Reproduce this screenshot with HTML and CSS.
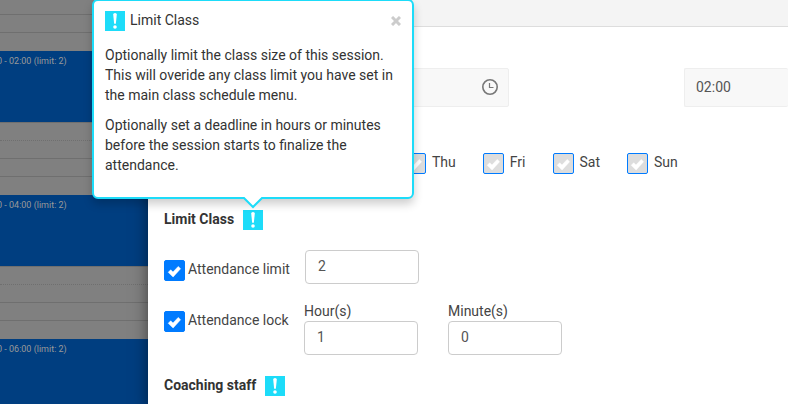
FILE: index.html
```html
<!DOCTYPE html>
<html lang="en">
<head>
    <meta charset="UTF-8">
    <meta name="viewport" content="width=device-width, initial-scale=1.0">
    <title>Limit Class</title>
    <link rel="stylesheet" href="styles.css">
</head>
<body>
    <svg class="defs" width="0" height="0">
        <symbol id="tick" viewBox="0 0 21 21">
            <path d="M4.2 12.3L6.7 9.8L9 12L14.2 6.4L16.6 8.7L9.1 17Z" fill="#fff" stroke="#fff" stroke-width=".5" stroke-linejoin="round"/>
        </symbol>
        <symbol id="info" viewBox="0 0 20 20">
            <path d="M8.2 3.6Q8.2 2 10 2T11.8 3.6L10.9 12.2Q10.7 13 10 13T9.1 12.2Z" fill="#fff"/>
            <circle cx="10" cy="16" r="1.8" fill="#fff"/>
        </symbol>
    </svg>

    <div class="page">
        <div class="calendar">
            <div class="slot first"></div>
            <div class="slot"></div>
            <div class="slot last"></div>
            <div class="event">0 - 02:00 (limit: 2)</div>
            <div class="slot half"></div>
            <div class="slot"></div>
            <div class="slot"></div>
            <div class="slot last"></div>
            <div class="event">0 - 04:00 (limit: 2)</div>
            <div class="slot half"></div>
            <div class="slot"></div>
            <div class="slot"></div>
            <div class="slot last"></div>
            <div class="event">0 - 06:00 (limit: 2)</div>
        </div>

        <div class="modal">
            <div class="modal-header"></div>
            <form class="modal-body">
                <div class="times">
                    <div class="time">
                        <input type="text" aria-label="Start time" disabled>
                        <svg class="clock" width="18" height="18" viewBox="0 0 18 18" fill="none" stroke="#777">
                            <circle cx="9" cy="9" r="7.2" stroke-width="1.6"/>
                            <path d="M8.5 5V9.5H12.5" stroke-width="1.2"/>
                        </svg>
                    </div>
                    <div class="time end">
                        <input type="text" aria-label="End time" value="02:00" disabled>
                    </div>
                </div>

                <div class="days">
                    <label class="day"><span class="check"><input type="checkbox" checked disabled><svg><use href="#tick"/></svg></span>Thu</label>
                    <label class="day"><span class="check"><input type="checkbox" checked disabled><svg><use href="#tick"/></svg></span>Fri</label>
                    <label class="day"><span class="check"><input type="checkbox" checked disabled><svg><use href="#tick"/></svg></span>Sat</label>
                    <label class="day"><span class="check"><input type="checkbox" checked disabled><svg><use href="#tick"/></svg></span>Sun</label>
                </div>

                <h4 class="section-title">Limit Class
                    <button type="button" class="info" aria-label="About limit class"><svg><use href="#info"/></svg></button>
                </h4>

                <div class="option">
                    <label class="option-name"><span class="check"><input type="checkbox" checked><svg><use href="#tick"/></svg></span>Attendance limit</label>
                    <input class="number" type="text" aria-label="Attendance limit value" value="2">
                </div>

                <div class="option lock">
                    <label class="option-name"><span class="check"><input type="checkbox" checked><svg><use href="#tick"/></svg></span>Attendance lock</label>
                    <div class="field">
                        <label for="hours">Hour(s)</label>
                        <input class="number" type="text" id="hours" value="1">
                    </div>
                    <div class="field">
                        <label for="minutes">Minute(s)</label>
                        <input class="number" type="text" id="minutes" value="0">
                    </div>
                </div>

                <h4 class="section-title">Coaching staff
                    <button type="button" class="info" aria-label="About coaching staff"><svg><use href="#info"/></svg></button>
                </h4>
            </form>
        </div>

        <div class="popover">
            <div class="popover-header">
                <span class="info"><svg><use href="#info"/></svg></span>
                <span class="popover-title">Limit Class</span>
                <button type="button" class="close" aria-label="Close">
                    <svg width="10" height="10" viewBox="0 0 10 10" stroke="#ccc" stroke-width="3">
                        <path d="M1 1L9 9M9 1L1 9"/>
                    </svg>
                </button>
            </div>
            <p>Optionally limit the class size of this session. This will overide any class limit you have set in the main class schedule menu.</p>
            <p>Optionally set a deadline in hours or minutes before the session starts to finalize the attendance.</p>
            <svg class="arrow" width="20" height="12" viewBox="0 0 20 12">
                <path d="M0 0H20L10 10Z" fill="#fff"/>
                <path d="M0 1H1L10 10L19 1H20" fill="none" stroke="#1ddcf9" stroke-width="2"/>
            </svg>
        </div>
    </div>
</body>
</html>
```

FILE: styles.css
```css
* {
    box-sizing: border-box;
}

body {
    margin: 0;
    font-family: Roboto, sans-serif;
    font-size: 14px;
    line-height: 20px;
    color: #333;
    background-color: #808080;
}

.defs {
    position: absolute;
}

.page {
    position: relative;
    display: flex;
    height: 100vh;
    overflow: hidden;
}

/* Calendar behind the backdrop */
.calendar {
    flex: 0 0 148px;
    background-color: #808080;
}

.slot {
    height: 18px;
    border-bottom: 1px solid #6f6f6f;
}

.slot.first {
    height: 15px;
}

.slot.half {
    border-bottom-style: dotted;
}

.slot.last {
    border-bottom: none;
}

.event {
    height: 72px;
    padding-top: 1px;
    background-color: #003e80;
    border-bottom: 1px solid #6f6f6f;
    font-size: 9px;
    line-height: 18px;
    color: #999;
    text-indent: -3px;
    white-space: nowrap;
}

/* Modal */
.modal {
    flex: 1;
    min-width: 0;
    background-color: #fff;
    box-shadow: 0 5px 15px rgba(0, 0, 0, 0.5);
}

.modal-header {
    height: 27px;
    background-color: #f4f4f4;
    border-bottom: 1px solid #ddd;
}

.modal-body {
    padding: 41px 0 0 16px;
}

.times {
    display: grid;
    grid-template-columns: 345fr 104fr;
    column-gap: 175px;
}

.time {
    display: flex;
    align-items: center;
    min-width: 0;
    height: 39px;
    padding: 0 9px 2px 11px;
    background-color: #f8f8f8;
    border: 1px solid #eee;
    border-radius: 2px;
}

.time.end {
    padding-right: 0;
    border-right: none;
}

.time input {
    flex: 1;
    min-width: 0;
    padding: 0;
    border: none;
    background: none;
    font: inherit;
    color: #555;
}

.days {
    display: flex;
    gap: 27px;
    margin-top: 46px;
    padding-left: 241px;
}

.day {
    display: flex;
    gap: 6px;
    line-height: 19px;
    color: #444;
}

.check {
    display: grid;
    width: 21px;
    height: 21px;
}

.check input,
.check svg {
    grid-area: 1 / 1;
    width: 21px;
    height: 21px;
    margin: 0;
}

.check svg {
    pointer-events: none;
}

.check input {
    appearance: none;
    background-color: #007bff;
    border: 1px solid #007bff;
    border-radius: 2px;
}

.check input:disabled {
    background-color: #ddd;
}

.section-title {
    display: flex;
    gap: 9px;
    margin: 36px 0 20px;
    font-size: 14px;
    font-weight: 700;
    line-height: 19px;
}

.info {
    display: block;
    width: 20px;
    height: 20px;
    padding: 0;
    border: none;
    background-color: #1ddcf9;
}

.info svg {
    display: block;
    width: 20px;
    height: 20px;
}

.option {
    display: flex;
}

.option-name {
    display: flex;
    gap: 3px;
    width: 141px;
    padding-top: 10px;
    line-height: 18px;
    color: #444;
}

.option.lock {
    gap: 30px;
    margin-top: 17px;
}

.lock .option-name {
    width: 110px;
    white-space: nowrap;
}

.field {
    display: flex;
    flex-direction: column;
    line-height: 20px;
    color: #444;
}

.number {
    width: 114px;
    height: 34px;
    padding: 0 12px 2px;
    border: 1px solid #ccc;
    border-radius: 4px;
    font: inherit;
    line-height: 20px;
    color: #555;
}

.lock + .section-title {
    margin-top: 21px;
}

/* Popover */
.popover {
    position: absolute;
    top: -1px;
    left: 92px;
    width: 322px;
    padding: 10px 11px 12px;
    background-color: #fff;
    border: 2px solid #1ddcf9;
    border-radius: 6px;
    box-shadow: 0 5px 10px rgba(0, 0, 0, 0.2);
}

.popover-header {
    display: flex;
    gap: 5px;
    margin-bottom: 14px;
}

.popover-title {
    flex: 1;
    line-height: 19px;
}

.close {
    padding: 0;
    border: none;
    background: none;
    line-height: 0;
}

.popover p {
    margin: 0 0 10px;
}

.arrow {
    position: absolute;
    top: 100%;
    left: 149px;
}
```
